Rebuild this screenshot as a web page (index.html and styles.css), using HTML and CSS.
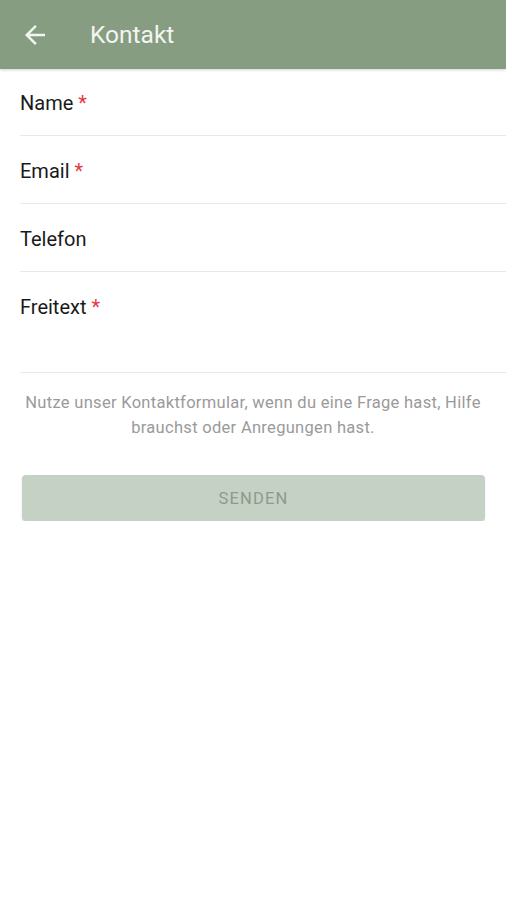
FILE: index.html
```html
<!DOCTYPE html>
<html lang="de">
<head>
<meta charset="utf-8">
<title>Kontakt</title>
<link rel="stylesheet" href="styles.css">
</head>
<body>
<header class="toolbar">
  <span class="back">
    <svg width="30" height="30" viewBox="0 0 24 24"><path d="M20 11H7.83l5.59-5.59L12 4l-8 8 8 8 1.41-1.41L7.83 13H20v-2z" fill="#f2f5f1"/></svg>
  </span>
  <h1 class="title">Kontakt</h1>
</header>
<main class="form">
  <div class="field"><span class="label">Name <span class="req">*</span></span></div>
  <div class="field"><span class="label">Email <span class="req">*</span></span></div>
  <div class="field"><span class="label">Telefon</span></div>
  <div class="field field-multi"><span class="label">Freitext <span class="req">*</span></span></div>
  <p class="info">Nutze unser Kontaktformular, wenn du eine Frage hast, Hilfe brauchst oder Anregungen hast.</p>
  <div class="actions"><button class="send" type="button">SENDEN</button></div>
</main>
</body>
</html>
```

FILE: styles.css
```css
html, body {
  margin: 0;
  padding: 0;
  background: #ffffff;
  font-family: Roboto, "Noto Sans", sans-serif;
}
.toolbar {
  height: 69px;
  background: #869d82;
  display: flex;
  align-items: center;
  box-shadow: 0 1px 3px rgba(0,0,0,0.18);
  position: relative;
}
.back {
  width: 30px;
  height: 30px;
  margin-left: 20px;
  display: flex;
}
.title {
  margin: 0 0 0 40px;
  font-size: 24.5px;
  font-weight: 400;
  color: #f2f5f1;
}
.form {
  display: flex;
  flex-direction: column;
}
.field {
  margin-left: 20px;
  height: 67px;
  border-bottom: 1.5px solid #e8e8e8;
  display: flex;
  align-items: center;
  padding-top: 2px;
  box-sizing: border-box;
}
.field + .field { height: 68px; }
.field-multi.field-multi {
  height: 101px;
  align-items: flex-start;
  padding-top: 23px;
}
.label {
  font-size: 20px;
  color: #1a1a1a;
}
.req {
  color: #e53945;
}
.info {
  margin: 17px 14px 0;
  text-align: center;
  color: #9a9a9a;
  font-size: 16.5px;
  letter-spacing: 0.3px;
  line-height: 25px;
}
.actions {
  padding: 35px 21px 0 22px;
}
.send {
  width: 100%;
  height: 46px;
  border: none;
  border-radius: 4px;
  background: #c5d1c4;
  color: #8d9a8c;
  font-family: Roboto, "Noto Sans", sans-serif;
  font-size: 16.5px;
  letter-spacing: 1.2px;
  box-shadow: 0 1px 2px rgba(0,0,0,0.12);
}
```
